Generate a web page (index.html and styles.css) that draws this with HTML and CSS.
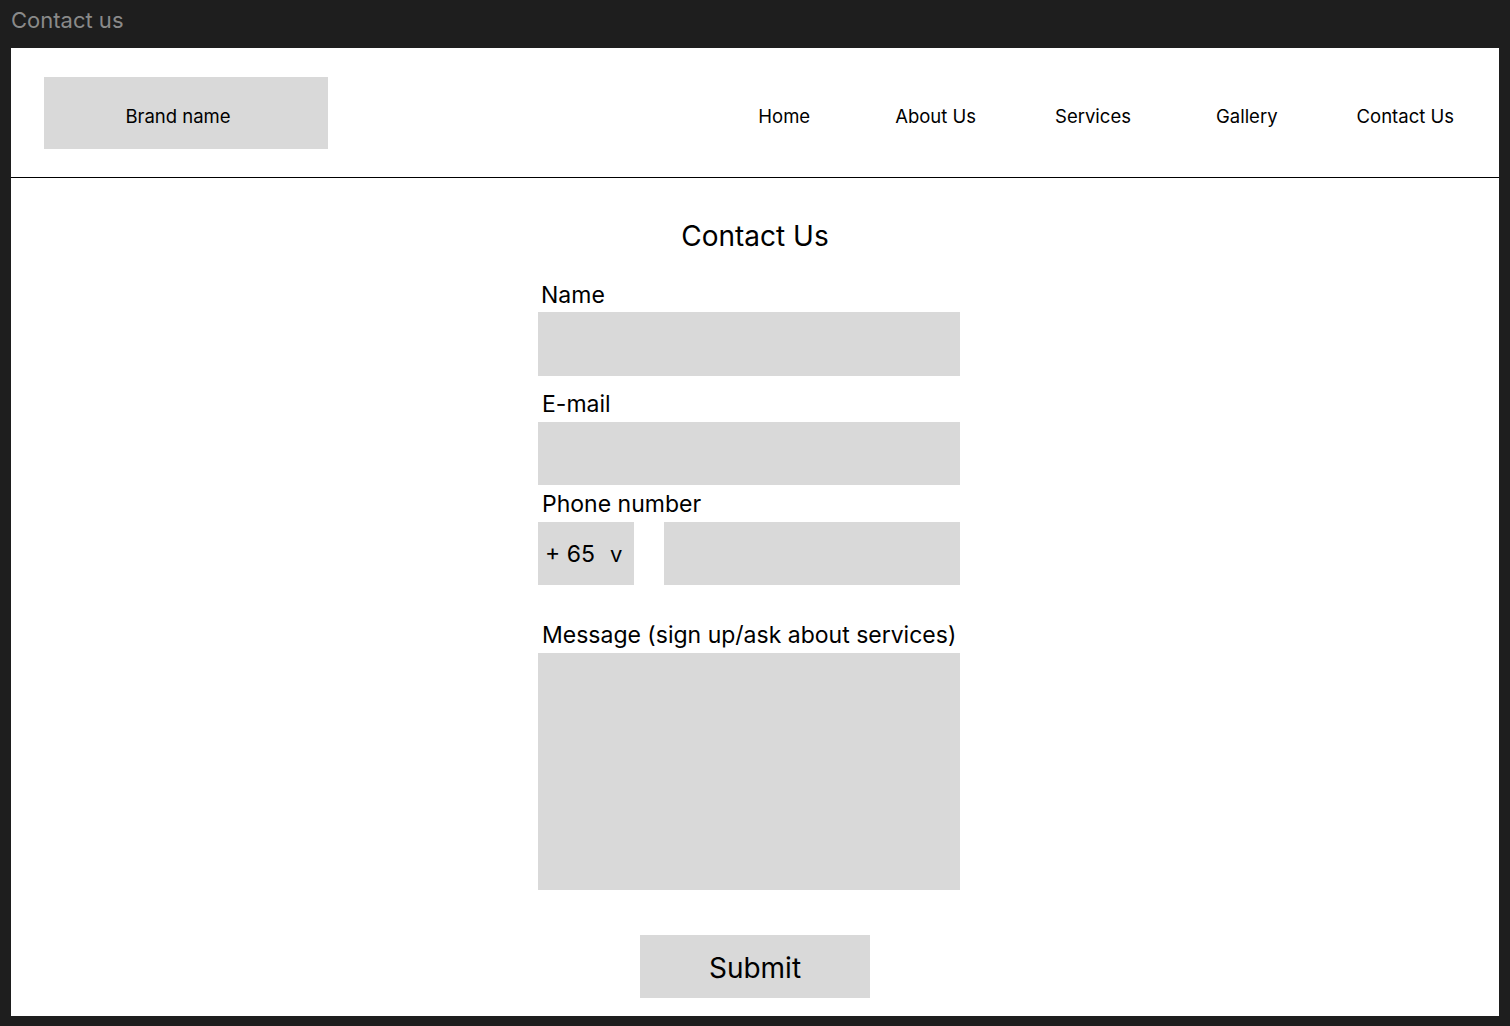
FILE: index.html
```html
<!DOCTYPE html>
<html>
<head>
<meta charset="utf-8">
<title>Contact us</title>
<link rel="stylesheet" href="styles.css">
</head>
<body>
<div class="frame-label">Contact us</div>
<div class="frame">
  <header class="header">
    <div class="brand">Brand name</div>
    <nav class="nav">
      <a class="nav-item wide">Home</a>
      <a class="nav-item">About Us</a>
      <a class="nav-item wide">Services</a>
      <a class="nav-item">Gallery</a>
      <a class="nav-item">Contact Us</a>
    </nav>
  </header>
  <main class="main">
    <h1 class="title">Contact Us</h1>
    <form class="form">
      <div class="label label-name">Name</div>
      <div class="field"></div>
      <div class="label label-email">E-mail</div>
      <div class="field field-email"></div>
      <div class="label label-phone">Phone number</div>
      <div class="phone-row">
        <div class="code"><span>+ 65</span><span class="chev">v</span></div>
        <div class="field phone-field"></div>
      </div>
      <div class="label label-msg">Message (sign up/ask about services)</div>
      <div class="field message"></div>
    </form>
    <div class="submit-wrap"><div class="submit">Submit</div></div>
  </main>
</div>
</body>
</html>
```

FILE: styles.css
```css
html, body {
  margin: 0;
  padding: 0;
  background: #1e1e1e;
  font-family: Inter, "Noto Sans", sans-serif;
  color: #000;
}
.frame-label {
  height: 48px;
  box-sizing: border-box;
  padding: 6px 0 0 11px;
  font-size: 22px;
  line-height: 28px;
  color: #8a8a8a;
}
.frame {
  margin-left: 11px;
  width: 1488px;
  height: 968px;
  background: #fff;
  overflow: hidden;
}
.header {
  height: 129px;
  border-bottom: 1px solid #000;
  display: flex;
  align-items: flex-start;
  justify-content: space-between;
  box-sizing: content-box;
}
.brand {
  margin: 29px 0 0 33px;
  width: 284px;
  height: 72px;
  background: #d9d9d9;
  box-sizing: border-box;
  padding: 5px 16px 0 0;
  display: flex;
  align-items: center;
  justify-content: center;
  font-size: 18.5px;
}
.nav {
  display: flex;
  gap: 79px;
  margin: 56px 45px 0 0;
  height: 24px;
  align-items: center;
}
.nav-item {
  font-size: 18.5px;
  line-height: 24px;
  color: #000;
}
.nav-item.wide {
  margin-right: 6px;
}
.main {
  display: flex;
  flex-direction: column;
}
.title {
  margin: 41px 0 0 0;
  text-align: center;
  font-size: 28px;
  font-weight: 400;
  line-height: 34px;
}
.form {
  margin-left: 527px;
  width: 422px;
  display: flex;
  flex-direction: column;
}
.label {
  font-size: 23px;
  line-height: 27px;
  padding-left: 4px;
}
.label-name { margin-top: 29px; padding-left: 3px; margin-bottom: 3px; }
.label-email { margin-top: 15px; margin-bottom: 4px; }
.label-phone { margin-top: 6px; margin-bottom: 4px; }
.label-msg { margin-top: 37px; margin-bottom: 4px; }
.field {
  height: 64px;
  background: #d9d9d9;
}
.field-email { height: 63px; }
.phone-row {
  display: flex;
  gap: 30px;
  height: 63px;
}
.code {
  width: 96px;
  background: #d9d9d9;
  display: flex;
  align-items: center;
  box-sizing: border-box;
  padding-left: 7px;
  font-size: 23px;
}
.chev {
  margin-left: 15px;
  font-size: 22px;
}
.phone-field {
  flex: 1;
  height: 63px;
}
.message {
  height: 237px;
}
.submit-wrap {
  display: flex;
  justify-content: center;
  margin-top: 45px;
}
.submit {
  width: 230px;
  height: 63px;
  background: #d9d9d9;
  display: flex;
  align-items: center;
  justify-content: center;
  font-size: 28px;
  padding-top: 2px;
  box-sizing: border-box;
}
```
